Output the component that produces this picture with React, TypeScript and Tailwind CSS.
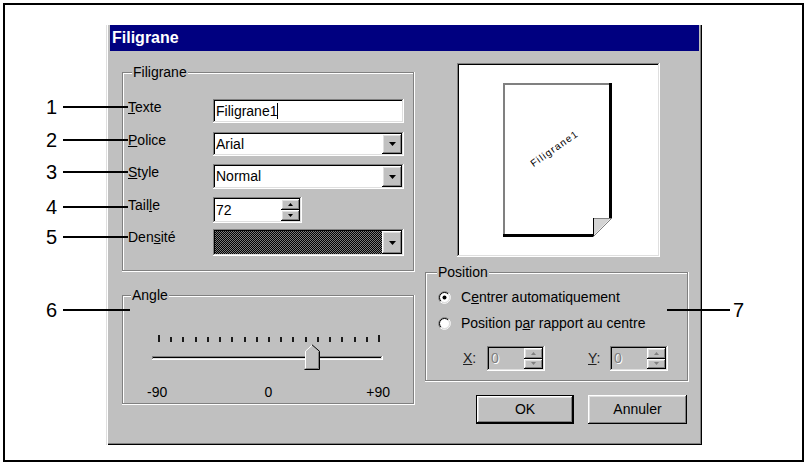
import React from "react";

// win95 bevels
const raised =
  "shadow-[inset_-1px_-1px_#000,inset_1px_1px_#fff,inset_-2px_-2px_#808080,inset_2px_2px_#dfdfdf]";
const defaultBtn =
  "shadow-[inset_-2px_-2px_#000,inset_1px_1px_#000,inset_2px_2px_#fff,inset_-3px_-3px_#808080,inset_3px_3px_#dfdfdf]";
const sunken =
  "shadow-[inset_-1px_-1px_#fff,inset_1px_1px_#808080,inset_-2px_-2px_#dfdfdf,inset_2px_2px_#000]";
const etched =
  "shadow-[inset_-1px_-1px_#fff,inset_-2px_-2px_#808080,inset_1px_1px_#808080,inset_2px_2px_#fff]";

function Group({
  label,
  labelLeft,
  className,
  children,
}: {
  label: string;
  labelLeft: string;
  className: string;
  children?: React.ReactNode;
}) {
  return (
    <div className={`relative ${etched} ${className}`}>
      <span
        className={`absolute -top-[8px] ${labelLeft} px-[1px] bg-[#c0c0c0] text-[14px] leading-[16px]`}
      >
        {label}
      </span>
      {children}
    </div>
  );
}

function Arrow({ dir, color = "#000", w = 7, h = 4 }: { dir: "up" | "down"; color?: string; w?: number; h?: number }) {
  const pts = dir === "up" ? `${w / 2},0 ${w},${h} 0,${h}` : `0,0 ${w},0 ${w / 2},${h}`;
  return (
    <svg width={w} height={h} className="block">
      <polygon points={pts} fill={color} />
    </svg>
  );
}

function DropButton() {
  return (
    <div className={`w-[20px] h-full bg-[#c0c0c0] flex items-center justify-center ${raised}`}>
      <Arrow dir="down" />
    </div>
  );
}

function SpinButtons({ disabled }: { disabled?: boolean }) {
  const c = disabled ? "#808080" : "#000";
  return (
    <div className="w-[19px] h-full flex flex-col">
      <div className={`flex-1 bg-[#c0c0c0] flex items-center justify-center ${raised}`}>
        <Arrow dir="up" color={c} w={5} h={3} />
      </div>
      <div className={`flex-1 bg-[#c0c0c0] flex items-center justify-center ${raised}`}>
        <Arrow dir="down" color={c} w={5} h={3} />
      </div>
    </div>
  );
}

function Radio({ checked }: { checked?: boolean }) {
  return (
    <svg width="13" height="13" viewBox="0 0 13 13" className="block shrink-0">
      <circle cx="6.5" cy="6.5" r="5" fill="#fff" />
      <path d="M2.26 10.74 A6 6 0 0 1 10.74 2.26" stroke="#808080" fill="none" />
      <path d="M10.74 2.26 A6 6 0 0 1 2.26 10.74" stroke="#fff" fill="none" />
      <path d="M2.96 10.04 A5 5 0 0 1 10.04 2.96" stroke="#000" fill="none" />
      <path d="M10.04 2.96 A5 5 0 0 1 2.96 10.04" stroke="#dfdfdf" fill="none" />
      {checked && <circle cx="6.5" cy="6.5" r="2" fill="#000" />}
    </svg>
  );
}

function Thumb() {
  return (
    <svg width="16" height="26" viewBox="0 0 16 26" className="block">
      <polygon points="1,25 1,7 8,1 15,7 15,25" fill="#c0c0c0" />
      <path d="M1.5 25 V7.2 L8 1.3" stroke="#fff" fill="none" />
      <path d="M8 0.8 L15.5 7.3 V25.5 H0.5" stroke="#000" fill="none" />
      <path d="M14.5 7.8 V24.5 H1.5" stroke="#808080" fill="none" />
    </svg>
  );
}

function PagePreview() {
  return (
    <svg width="199" height="190" className="block">
      <polygon points="44,18 153,18 153,153 134,172 44,172" fill="#fff" />
      <path d="M45 171 V19 H150" stroke="#808080" strokeWidth="2" fill="none" />
      <path d="M151.5 18 V154" stroke="#000" strokeWidth="3" />
      <path d="M44 170.5 H135" stroke="#000" strokeWidth="3" />
      <polygon points="134,153 152,153 134,171" fill="#d4d4d4" />
      <path d="M134.5 153 V171" stroke="#000" />
      <path d="M135 153.5 H152" stroke="#808080" />
      <line x1="153" y1="153" x2="134" y2="172" stroke="#808080" />
      <text
        x="95"
        y="87"
        transform="rotate(-35 95 83)"
        fontSize="10"
        letterSpacing="1.2"
        textAnchor="middle"
        fontFamily="'Liberation Sans', Arial, sans-serif"
        fill="#000"
      >
        Filigrane1
      </text>
    </svg>
  );
}

function FieldRow({
  label,
  className,
  children,
}: {
  label: React.ReactNode;
  className?: string;
  children: React.ReactNode;
}) {
  return (
    <div className={`flex items-start ${className ?? ""}`}>
      <div className="w-[85px] text-[14px] leading-[16px]">{label}</div>
      {children}
    </div>
  );
}

function LeftCallout({ n, className, lineW }: { n: string; className: string; lineW: string }) {
  return (
    <div className={`absolute left-[45px] flex items-center ${className}`}>
      <span className="w-[12px] text-right text-[20px] leading-[20px]">{n}</span>
      <span className={`ml-[6px] h-[2px] bg-black ${lineW}`} />
    </div>
  );
}

export default function App() {
  const ticks = Array.from({ length: 19 }, (_, i) => i);

  return (
    <div className="relative w-[810px] h-[468px] bg-white pl-[3px] pt-[3px] font-['Liberation_Sans',Arial,sans-serif] text-black">
      <div className="w-[801px] h-[459px] border-2 border-black">
        {/* dialog */}
        <div className="ml-[101px] mt-[20px] w-[596px] h-[420px] bg-[#c0c0c0] shadow-[inset_1px_0_#dfdfdf,inset_2px_0_#fff,inset_-1px_-1px_#000,inset_-2px_-2px_#808080]">
          <div className="ml-[4px] mr-[3px] h-[26px] bg-[#000080] flex items-center pl-[2px] text-white font-bold text-[16px]">
            Filigrane
          </div>

          <div className="flex pl-[16px] gap-[10px]">
            {/* left column */}
            <div className="w-[293px]">
              <Group label="Filigrane" labelLeft="left-[10px]" className="mt-[21px] h-[200px] pt-[27px] pl-[6px]">
                <FieldRow label={<><span className="underline">T</span>exte</>}>
                  <div className={`w-[191px] h-[24px] bg-white p-[2px] flex items-center ${sunken}`}>
                    <span className="pl-[1px] text-[14px] leading-[16px]">Filigrane1</span>
                    <span className="inline-block w-px h-[16px] bg-black" />
                  </div>
                </FieldRow>
                <FieldRow className="mt-[9px]" label={<><span className="underline">P</span>olice</>}>
                  <div className={`w-[191px] h-[24px] bg-white p-[2px] flex ${sunken}`}>
                    <div className="flex-1 flex items-center pl-[1px] text-[14px]">Arial</div>
                    <DropButton />
                  </div>
                </FieldRow>
                <FieldRow className="mt-[8px]" label={<><span className="underline">S</span>tyle</>}>
                  <div className={`w-[191px] h-[25px] bg-white p-[2px] flex ${sunken}`}>
                    <div className="flex-1 flex items-center pl-[1px] text-[14px]">Normal</div>
                    <DropButton />
                  </div>
                </FieldRow>
                <FieldRow className="mt-[8px]" label={<>Tail<span className="underline">l</span>e</>}>
                  <div className={`w-[89px] h-[26px] bg-white p-[2px] flex ${sunken}`}>
                    <div className="flex-1 flex items-center pl-[1px] text-[14px]">72</div>
                    <SpinButtons />
                  </div>
                </FieldRow>
                <FieldRow className="mt-[6px]" label={<>Den<span className="underline">s</span>ité</>}>
                  <div className={`w-[191px] h-[27px] bg-white p-[2px] flex ${sunken}`}>
                    <div className="flex-1 bg-[image:repeating-conic-gradient(#000_0%_25%,#7a7a7a_0%_50%)] bg-[length:2px_2px]" />
                    <DropButton />
                  </div>
                </FieldRow>
              </Group>

              <Group label="Angle" labelLeft="left-[9px]" className="mt-[23px] h-[110px] pt-[40px]">
                <div className="ml-[36px] w-[222px] h-[7px] flex justify-between items-end">
                  {ticks.map((i) => (
                    <span
                      key={i}
                      className={`w-[2px] bg-[#1a1a1a] ${i === 0 || i === ticks.length - 1 ? "h-[7px]" : "h-[5px]"}`}
                    />
                  ))}
                </div>
                <div className={`relative ml-[30px] mt-[14px] w-[231px] h-[4px] bg-[#c0c0c0] ${sunken}`}>
                  <div className="absolute left-[152px] -top-[12px]">
                    <Thumb />
                  </div>
                </div>
                <div className="ml-[25px] mt-[24px] w-[243px] grid grid-cols-3 text-[14px] leading-[16px]">
                  <span className="text-left">-90</span>
                  <span className="text-center">0</span>
                  <span className="text-right">+90</span>
                </div>
              </Group>
            </div>

            {/* right column */}
            <div className="w-[264px]">
              <div className={`ml-[32px] mt-[12px] w-[203px] h-[194px] bg-white p-[2px] ${sunken}`}>
                <PagePreview />
              </div>

              <Group label="Position" labelLeft="left-[12px]" className="mt-[15px] h-[110px] pl-[13px] pt-[17px]">
                <div className="flex items-center h-[16px] gap-[10px] text-[14px]">
                  <Radio checked />
                  <span>
                    C<span className="underline">e</span>ntrer automatiquement
                  </span>
                </div>
                <div className="flex items-center h-[16px] gap-[10px] mt-[10px] text-[14px]">
                  <Radio />
                  <span>
                    Position p<span className="underline">a</span>r rapport au centre
                  </span>
                </div>
                <div className="flex items-center mt-[15px] ml-[25px] text-[14px]">
                  <span className="w-[24px] text-[#202020]">
                    <span className="underline">X</span>:
                  </span>
                  <div className={`w-[58px] h-[25px] bg-[#c0c0c0] p-[2px] flex ${sunken}`}>
                    <div className="flex-1 flex items-center pl-[2px] text-[#808080] [text-shadow:1px_1px_0_#fff]">0</div>
                    <SpinButtons disabled />
                  </div>
                  <span className="ml-[43px] w-[22px] text-[#202020]">
                    <span className="underline">Y</span>:
                  </span>
                  <div className={`w-[58px] h-[25px] bg-[#c0c0c0] p-[2px] flex ${sunken}`}>
                    <div className="flex-1 flex items-center pl-[2px] text-[#808080] [text-shadow:1px_1px_0_#fff]">0</div>
                    <SpinButtons disabled />
                  </div>
                </div>
              </Group>

              <div className="mt-[13px] flex justify-end gap-[14px] pr-[2px]">
                <button className={`w-[98px] h-[29px] bg-[#c0c0c0] text-[14px] flex items-center justify-center ${defaultBtn}`}>
                  OK
                </button>
                <button className={`w-[99px] h-[29px] bg-[#c0c0c0] text-[14px] flex items-center justify-center ${raised}`}>
                  Annuler
                </button>
              </div>
            </div>
          </div>
        </div>
      </div>

      {/* callouts */}
      <LeftCallout n="1" className="top-[97px]" lineW="w-[65px]" />
      <LeftCallout n="2" className="top-[130px]" lineW="w-[65px]" />
      <LeftCallout n="3" className="top-[162px]" lineW="w-[65px]" />
      <LeftCallout n="4" className="top-[197px]" lineW="w-[65px]" />
      <LeftCallout n="5" className="top-[227px]" lineW="w-[65px]" />
      <LeftCallout n="6" className="top-[300px]" lineW="w-[67px]" />
      <div className="absolute left-[667px] top-[300px] flex items-center">
        <span className="w-[63px] h-[2px] bg-black" />
        <span className="ml-[3px] text-[20px] leading-[20px]">7</span>
      </div>
    </div>
  );
}
